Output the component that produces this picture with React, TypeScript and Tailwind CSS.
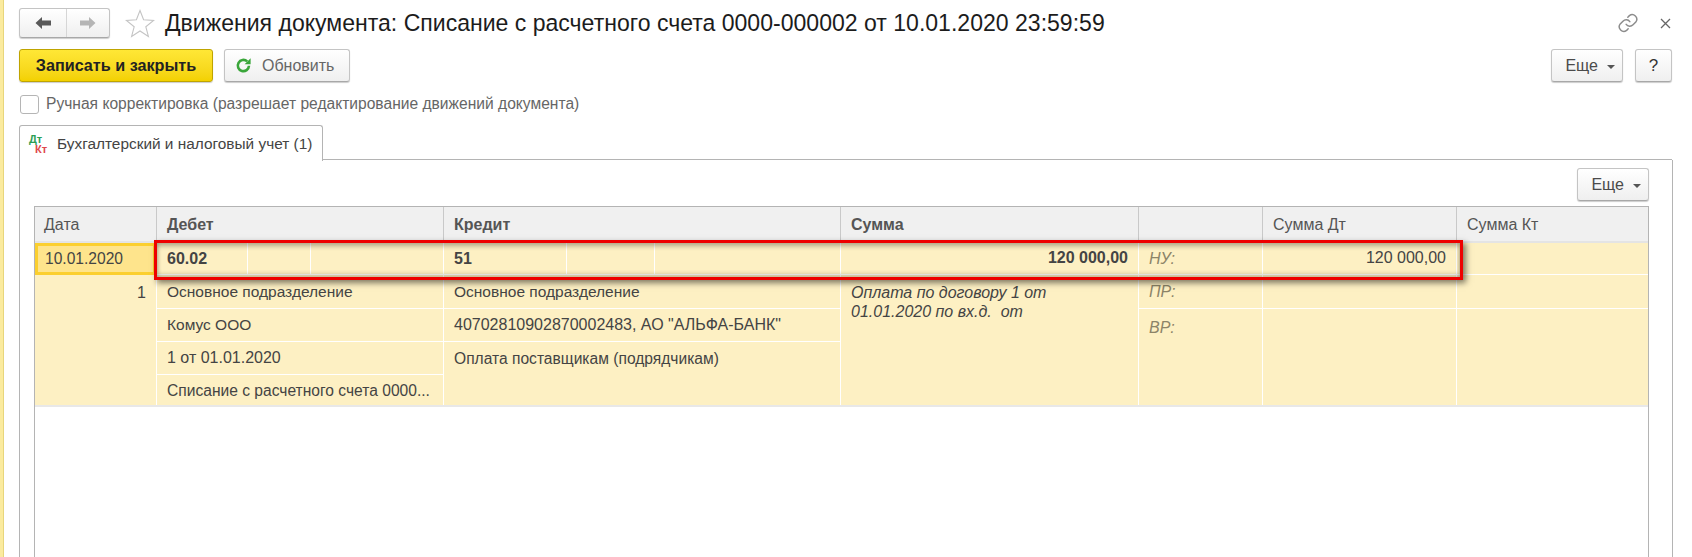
import React from "react";

const Caret = () => (
  <svg width="8" height="4" viewBox="0 0 8 4" className="ml-[9px] mt-[3px]">
    <path d="M0 0h8L4 4z" fill="#555" />
  </svg>
);

const btn =
  "flex items-center rounded-[3px] border border-[#c4c4c4] border-b-[#a8a8a8] bg-gradient-to-b from-white to-[#efefef] shadow-[0_1px_1px_rgba(0,0,0,0.2)]";

const More = ({ className = "" }: { className?: string }) => (
  <div className={`${btn} h-[33px] w-[72px] justify-end pr-[7px] text-[#4b4b4b] ${className}`}>
    <span className="text-[16px]">Еще</span>
    <Caret />
  </div>
);

const Cell = ({
  children,
  h,
  className = "",
  line = true,
}: {
  children?: React.ReactNode;
  h: string;
  className?: string;
  line?: boolean;
}) => (
  <div className={`flex shrink-0 items-center overflow-hidden whitespace-nowrap px-[10px] ${h} ${line ? "border-b border-white" : ""} ${className}`}>
    {children}
  </div>
);

const Col = ({ w, children, last = false }: { w: string; children?: React.ReactNode; last?: boolean }) => (
  <div className={`flex shrink-0 flex-col ${w} ${last ? "" : "border-r border-white"}`}>{children}</div>
);

const Head = ({ w, children, bold = false, last = false, className = "pl-[10px]" }: { w: string; children?: React.ReactNode; bold?: boolean; last?: boolean; className?: string }) => (
  <div className={`flex h-full shrink-0 items-center pt-[1px] text-[16px] ${bold ? "font-bold" : ""} text-[#555] ${w} ${last ? "" : "border-r border-[#c9c9c9]"} ${className}`}>
    {children}
  </div>
);

export default function App() {
  return (
    <div className="flex h-[557px] w-[1692px] overflow-hidden bg-white text-[16px] text-[#444] [font-family:'Liberation_Sans',Arial,sans-serif]">
      <div className="h-full w-[4px] shrink-0 border-r border-[#e8d67c] bg-[#fbeb9f]" />
      <div className="flex min-w-0 flex-1 flex-col pl-[15px]">
        {/* title bar */}
        <div className="mt-[8px] flex h-[30px] items-center">
          <div className={`${btn} h-[30px] w-[91px]`}>
            <div className="flex h-full w-[47px] items-center justify-center border-r border-[#d6d6d6]">
              <svg width="18" height="14" viewBox="0 0 18 14">
                <path d="M8 1L1.5 7 8 13V9.5h9v-5H8z" fill="#595959" />
              </svg>
            </div>
            <div className="flex h-full flex-1 items-center justify-center">
              <svg width="18" height="14" viewBox="0 0 18 14">
                <path d="M10 1l6.5 6L10 13V9.5H1v-5h9z" fill="#b5b5b5" />
              </svg>
            </div>
          </div>
          <svg width="30" height="29" viewBox="0 0 30 29" className="ml-[15px]">
            <path d="M15 1.5l3.6 9.3 10 .6-7.8 6.3 2.6 9.7L15 22l-8.4 5.4 2.6-9.7-7.8-6.3 10-.6z" fill="#fff" stroke="#c4c4c4" strokeWidth="1.1" />
          </svg>
          <span className="ml-[10px] whitespace-nowrap text-[23.05px] text-[#1c1c1c]">
            Движения документа: Списание с расчетного счета 0000-000002 от 10.01.2020 23:59:59
          </span>
          <svg width="22" height="22" viewBox="0 0 24 24" fill="none" stroke="#8c8c8c" strokeWidth="1.6" strokeLinecap="round" className="ml-auto">
            <path d="M10 13.5a5 5 0 0 0 7.5.5l3-3a5 5 0 0 0-7-7l-1.7 1.7" />
            <path d="M14 10.5a5 5 0 0 0-7.5-.5l-3 3a5 5 0 0 0 7 7l1.7-1.7" />
          </svg>
          <svg width="11" height="11" viewBox="0 0 11 11" stroke="#666" strokeWidth="1.3" className="ml-[21px] mr-[21px]">
            <path d="M1 1l9 9M10 1l-9 9" />
          </svg>
        </div>
        {/* command bar */}
        <div className="mt-[11px] flex h-[33px] items-center">
          <div className="flex h-full w-[194px] items-center justify-center rounded-[3px] border border-[#bfa400] bg-gradient-to-b from-[#ffe735] to-[#f3d100] text-[16.2px] font-bold text-[#222] shadow-[0_1px_1px_rgba(0,0,0,0.2)]">
            Записать и закрыть
          </div>
          <div className={`${btn} ml-[11px] h-full w-[126px] pl-[10px]`}>
            <svg width="17" height="17" viewBox="0 0 17 17" fill="none">
              <path d="M14 8.8a5.6 5.6 0 1 1-1.8-4.4" stroke="#3aa63a" strokeWidth="2.6" />
              <path d="M15.6 1.2v6h-6z" fill="#3aa63a" />
            </svg>
            <span className="ml-[10px] text-[#666]">Обновить</span>
          </div>
          <More className="ml-auto" />
          <div className={`${btn} ml-[12px] mr-[20px] h-full w-[37px] justify-center text-[17px] text-[#333]`}>?</div>
        </div>
        {/* checkbox */}
        <div className="mt-[12px] flex h-[20px] items-center">
          <div className="ml-px h-[19px] w-[19px] rounded-[3px] border border-[#b5b5b5] bg-white" />
          <span className="ml-[7px] text-[15.6px] text-[#666]">Ручная корректировка (разрешает редактирование движений документа)</span>
        </div>
        {/* tab */}
        <div className="mt-[11px] flex h-[35px] items-stretch">
          <div className="z-10 -mb-px flex w-[304px] items-center rounded-t-[3px] border border-b-0 border-[#b4b4b4] bg-white pl-[9px]">
            <div className="flex h-[20px] w-[20px] flex-col text-[11px] font-bold leading-[10px]">
              <span className="text-[#2e9e55]">Дт</span>
              <span className="ml-[6px] text-[#e0484c]">Кт</span>
            </div>
            <span className="ml-[8px] text-[15.4px] text-[#444]">Бухгалтерский и налоговый учет (1)</span>
          </div>
          <div className="flex-1 border-b border-[#b4b4b4]" />
          <div className="mr-[20px] border-b border-[#b4b4b4]" />
        </div>
        {/* panel */}
        <div className="mr-[19px] flex min-h-0 flex-1 flex-col border-x border-[#b4b4b4] pl-[14px] pr-[23px]">
          <div className="mt-[8px] flex h-[33px] justify-end">
            <More />
          </div>
          <div className="relative mt-[5px] flex-1 border-x border-t border-[#b4b4b4]">
            <div className="flex h-[36px] border-b-2 border-[#e4e4e4] bg-[#f0f0f0]">
              <Head w="w-[122px]" className="pl-[9px]">Дата</Head>
              <Head w="w-[287px]" bold>Дебет</Head>
              <Head w="w-[397px]" bold>Кредит</Head>
              <Head w="w-[298px]" bold>Сумма</Head>
              <Head w="w-[124px]" />
              <Head w="w-[194px]">Сумма Дт</Head>
              <Head w="flex-1" last>Сумма Кт</Head>
            </div>
            <div className="flex h-[164px] border-b-2 border-[#e8e8e8] bg-[#fdf0c3]">
              <Col w="w-[122px]">
                <div className="flex h-[32px] shrink-0 items-center border-[3px] border-[#fbcf2f] bg-[#fee48c] pl-[7px] text-[15.6px]">10.01.2020</div>
                <div className="pr-[10px] pt-[6px] text-right">1</div>
              </Col>
              <Col w="w-[287px]">
                <div className="flex h-[32px] shrink-0 border-b border-white font-bold">
                  <div className="w-[91px] border-r border-white px-[10px] pt-[4px]">60.02</div>
                  <div className="w-[63px] border-r border-white" />
                </div>
                <Cell h="h-[34px]" className="pt-[1px] text-[15.5px]">Основное подразделение</Cell>
                <Cell h="h-[33px]" className="text-[15.5px]">Комус ООО</Cell>
                <Cell h="h-[33px]">1 от 01.01.2020</Cell>
                <Cell h="h-[30px]" className="pt-[1px] text-[15.6px]" line={false}>Списание с расчетного счета 0000...</Cell>
              </Col>
              <Col w="w-[397px]">
                <div className="flex h-[32px] shrink-0 border-b border-white font-bold">
                  <div className="w-[123px] border-r border-white px-[10px] pt-[4px]">51</div>
                  <div className="w-[88px] border-r border-white" />
                </div>
                <Cell h="h-[34px]" className="pt-[1px] text-[15.5px]">Основное подразделение</Cell>
                <Cell h="h-[33px]">40702810902870002483, АО "АЛЬФА-БАНК"</Cell>
                <Cell h="h-[33px]" className="text-[15.6px]" line={false}>Оплата поставщикам (подрядчикам)</Cell>
              </Col>
              <Col w="w-[298px]">
                <Cell h="h-[32px]" className="justify-end pb-[2px] font-bold">120 000,00</Cell>
                <div className="pl-[10px] pt-[8px] italic leading-[19px]">
                  Оплата по договору 1 от
                  <br />
                  01.01.2020 по вх.д. &nbsp;от
                </div>
              </Col>
              <Col w="w-[124px]">
                <Cell h="h-[32px]" className="italic text-[#8c8468]">НУ:</Cell>
                <Cell h="h-[34px]" className="pt-[1px] italic text-[#8c8468]">ПР:</Cell>
                <div className="px-[10px] pt-[7px] italic text-[#8c8468]">ВР:</div>
              </Col>
              <Col w="w-[194px]">
                <Cell h="h-[32px]" className="justify-end pb-[2px]">120 000,00</Cell>
                <Cell h="h-[34px]" />
              </Col>
              <Col w="flex-1" last>
                <Cell h="h-[32px]" />
                <Cell h="h-[34px]" />
              </Col>
            </div>
            <div className="pointer-events-none absolute left-[119px] top-[33px] h-[40px] w-[1309px] border-[3px] border-[#ee0000] shadow-[3px_3px_6px_rgba(0,0,0,0.5),inset_0_3px_5px_rgba(0,0,0,0.3),inset_0_-3px_4px_rgba(0,0,0,0.2)]" />
          </div>
        </div>
      </div>
    </div>
  );
}
